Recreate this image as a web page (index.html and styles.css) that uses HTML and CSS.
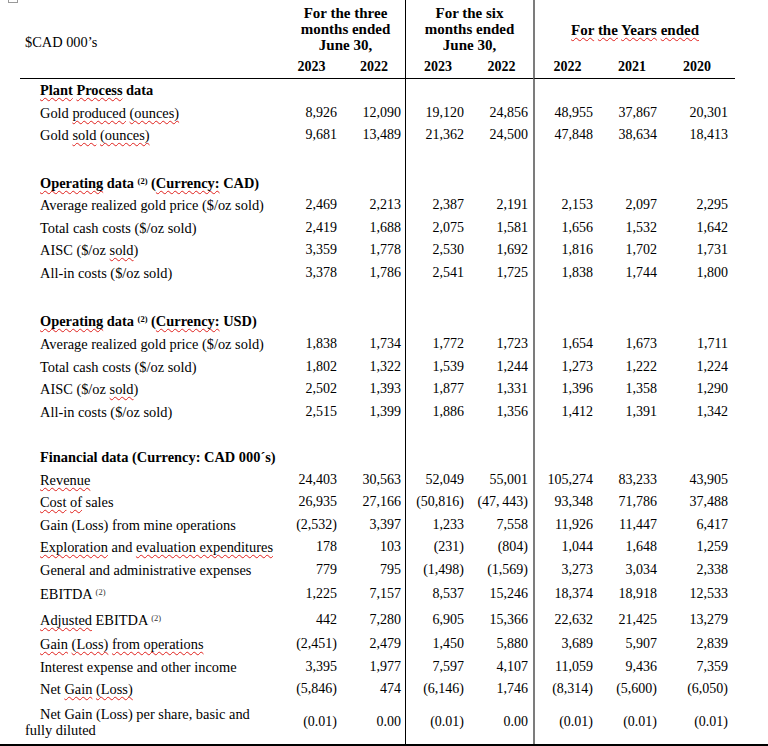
FILE: index.html
```html
<!DOCTYPE html>
<html lang="en">
<head>
<meta charset="utf-8">
<title>Financial highlights</title>
<link rel="stylesheet" href="styles.css">
</head>
<body>
<div class="page">
  <span class="handle"></span>
  <table class="fin">
    <colgroup>
      <col class="c0"><col class="c1"><col class="c2"><col class="c3"><col class="c4"><col class="c5"><col class="c6"><col class="c7">
    </colgroup>
    <thead>
      <tr class="hd1">
        <th class="cad" rowspan="2">$CAD 000’s</th>
        <th colspan="2" class="grp g3">For the three<br>months ended<br>June 30,</th>
        <th colspan="2" class="grp sep1">For the six<br>months ended<br>June 30,</th>
        <th colspan="3" class="grp gy sep2"><span class="sp">For</span> <span class="sp">the</span> <span class="sp">Years</span> <span class="sp">ended</span></th>
      </tr>
      <tr class="hd2">
        <th class="yr">2023</th><th class="yr">2022</th><th class="yr sep1">2023</th><th class="yr">2022</th><th class="yr sep2">2022</th><th class="yr">2021</th><th class="yr y7">2020</th>
      </tr>
    </thead>
    <tbody>
      <tr><td class="l h"><span class="sp">Plant</span> <span class="sp">Process</span> data</td><td></td><td></td><td></td><td></td><td></td><td></td><td></td></tr>
      <tr><td class="l">Gold <span class="sp">produced</span> <span class="sp">(ounces)</span></td><td>8,926</td><td>12,090</td><td>19,120</td><td>24,856</td><td>48,955</td><td>37,867</td><td>20,301</td></tr>
      <tr><td class="l">Gold <span class="sp">sold</span> <span class="sp">(ounces)</span></td><td>9,681</td><td>13,489</td><td>21,362</td><td>24,500</td><td>47,848</td><td>38,634</td><td>18,413</td></tr>
      <tr class="blank-a"><td></td><td></td><td></td><td></td><td></td><td></td><td></td><td></td></tr>

      <tr><td class="l h"><span class="sp">Operating</span> data <sup class="fn">(2)</sup> (<span class="sp">Currency:</span> CAD)</td><td></td><td></td><td></td><td></td><td></td><td></td><td></td></tr>
      <tr><td class="l">Average realized gold price ($/oz sold)</td><td>2,469</td><td>2,213</td><td>2,387</td><td>2,191</td><td>2,153</td><td>2,097</td><td>2,295</td></tr>
      <tr><td class="l">Total cash costs ($/oz sold)</td><td>2,419</td><td>1,688</td><td>2,075</td><td>1,581</td><td>1,656</td><td>1,532</td><td>1,642</td></tr>
      <tr><td class="l">AISC ($/oz <span class="sp">sold</span>)</td><td>3,359</td><td>1,778</td><td>2,530</td><td>1,692</td><td>1,816</td><td>1,702</td><td>1,731</td></tr>
      <tr><td class="l">All-in costs ($/oz sold)</td><td>3,378</td><td>1,786</td><td>2,541</td><td>1,725</td><td>1,838</td><td>1,744</td><td>1,800</td></tr>
      <tr class="blank-a"><td></td><td></td><td></td><td></td><td></td><td></td><td></td><td></td></tr>

      <tr class="head-usd"><td class="l h"><span class="sp">Operating</span> data <sup class="fn">(2)</sup> (<span class="sp">Currency:</span> USD)</td><td></td><td></td><td></td><td></td><td></td><td></td><td></td></tr>
      <tr><td class="l">Average realized gold price ($/oz sold)</td><td>1,838</td><td>1,734</td><td>1,772</td><td>1,723</td><td>1,654</td><td>1,673</td><td>1,711</td></tr>
      <tr><td class="l">Total cash costs ($/oz sold)</td><td>1,802</td><td>1,322</td><td>1,539</td><td>1,244</td><td>1,273</td><td>1,222</td><td>1,224</td></tr>
      <tr><td class="l">AISC ($/oz <span class="sp">sold</span>)</td><td>2,502</td><td>1,393</td><td>1,877</td><td>1,331</td><td>1,396</td><td>1,358</td><td>1,290</td></tr>
      <tr><td class="l">All-in costs ($/oz sold)</td><td>2,515</td><td>1,399</td><td>1,886</td><td>1,356</td><td>1,412</td><td>1,391</td><td>1,342</td></tr>
      <tr class="blank-b"><td></td><td></td><td></td><td></td><td></td><td></td><td></td><td></td></tr>

      <tr><td class="l h">Financial data (Currency: CAD 000´s)</td><td></td><td></td><td></td><td></td><td></td><td></td><td></td></tr>
      <tr><td class="l"><span class="sp">Revenue</span></td><td>24,403</td><td>30,563</td><td>52,049</td><td>55,001</td><td>105,274</td><td>83,233</td><td>43,905</td></tr>
      <tr><td class="l"><span class="sp">Cost</span> <span class="sp">of</span> sales</td><td>26,935</td><td>27,166</td><td>(50,816)</td><td>(47,&#8201;443)</td><td>93,348</td><td>71,786</td><td>37,488</td></tr>
      <tr><td class="l">Gain (Loss) from mine operations</td><td>(2,532)</td><td>3,397</td><td>1,233</td><td>7,558</td><td>11,926</td><td>11,447</td><td>6,417</td></tr>
      <tr><td class="l"><span class="sp">Exploration</span> and <span class="sp">evaluation expenditures</span></td><td>178</td><td>103</td><td>(231)</td><td>(804)</td><td>1,044</td><td>1,648</td><td>1,259</td></tr>
      <tr><td class="l">General and administrative expenses</td><td>779</td><td>795</td><td>(1,498)</td><td>(1,569)</td><td>3,273</td><td>3,034</td><td>2,338</td></tr>
      <tr class="r-ebitda"><td class="l">EBITDA <sup class="fn lt">(2)</sup></td><td>1,225</td><td>7,157</td><td>8,537</td><td>15,246</td><td>18,374</td><td>18,918</td><td>12,533</td></tr>
      <tr class="r-adj"><td class="l"><span class="sp">Adjusted</span> EBITDA <sup class="fn lt">(2)</sup></td><td>442</td><td>7,280</td><td>6,905</td><td>15,366</td><td>22,632</td><td>21,425</td><td>13,279</td></tr>
      <tr><td class="l"><span class="sp">Gain</span> <span class="sp">(Loss)</span> <span class="sp">from operations</span></td><td>(2,451)</td><td>2,479</td><td>1,450</td><td>5,880</td><td>3,689</td><td>5,907</td><td>2,839</td></tr>
      <tr><td class="l">Interest expense and other income</td><td>3,395</td><td>1,977</td><td>7,597</td><td>4,107</td><td>11,059</td><td>9,436</td><td>7,359</td></tr>
      <tr><td class="l">Net <span class="sp">Gain</span> <span class="sp">(Loss)</span></td><td>(5,846)</td><td>474</td><td>(6,146)</td><td>1,746</td><td>(8,314)</td><td>(5,600)</td><td>(6,050)</td></tr>
      <tr class="r-last"><td class="l wrap">Net Gain (Loss) per share, basic and fully diluted</td><td>(0.01)</td><td>0.00</td><td>(0.01)</td><td>0.00</td><td>(0.01)</td><td>(0.01)</td><td>(0.01)</td></tr>
    </tbody>
  </table>
</div>
</body>
</html>
```

FILE: styles.css
```css
html, body {
  margin: 0;
  padding: 0;
  background: #fff;
}

body {
  font-family: "Liberation Serif", "Times New Roman", serif;
  color: #000;
}

.page {
  position: relative;
  width: 768px;
  height: 744px;
  border-bottom: 2px solid #000;
  overflow: hidden;
}

.handle {
  position: absolute;
  left: 8px;
  top: -4px;
  width: 8px;
  height: 5px;
  border: 1px solid #9a9a9a;
}

.fin {
  margin-left: 20px;
  width: 715px;
  table-layout: fixed;
  border-collapse: separate;
  border-spacing: 0;
}

.fin col, .fin th, .fin td {
  box-sizing: border-box;
}

.c0 { width: 260px; }
.c1 { width: 63px; }
.c2 { width: 62px; }
.c3 { width: 65px; }
.c4 { width: 63px; }
.c5 { width: 67px; }
.c6 { width: 64px; }
.c7 { width: 71px; }

/* header */
.fin th {
  font-weight: bold;
  padding: 0;
  vertical-align: middle;
  text-align: center;
  white-space: nowrap;
}

.hd1 { height: 56px; }
.hd1 th { line-height: 16px; font-size: 15px; }
.hd1 .grp { vertical-align: top; padding-top: 5px; }
.hd1 .g3 { padding-left: 6px; }
.hd1 .gy { vertical-align: middle; padding-top: 3px; }

.fin th.cad {
  font-weight: normal;
  font-size: 14.4px;
  text-align: left;
  padding-left: 5px;
  padding-top: 6px;
  border-bottom: 1px solid #000;
}

.hd2 { height: 23px; }
.hd2 th {
  font-size: 14px;
  line-height: 16px;
  border-bottom: 1px solid #000;
}
.hd2 .y7 { padding-right: 5px; }

.sep1 { border-left: 1px solid #000; }
.sep2 { border-left: 2px solid #7c7c7c; }

/* body */
.fin tbody tr { height: 22.6px; }
.fin tbody tr.blank-a { height: 24.5px; }
.fin tbody tr.blank-b { height: 22.5px; }
.fin tbody tr.head-usd { height: 24px; }
.fin tbody tr.r-ebitda { height: 25.5px; }
.fin tbody tr.r-adj { height: 26px; }
.fin tbody tr.r-last { height: 43.4px; }

.fin td {
  padding: 0;
  font-size: 14px;
  line-height: 16px;
  text-align: right;
  vertical-align: middle;
  white-space: nowrap;
}

.fin td:nth-child(2) { padding-right: 6px; }
.fin td:nth-child(3) { padding-right: 4px; }
.fin td:nth-child(4) { padding-right: 6px; border-left: 1px solid #000; }
.fin td:nth-child(5) { padding-right: 5px; }
.fin td:nth-child(6) { padding-right: 7px; border-left: 2px solid #7c7c7c; }
.fin td:nth-child(7) { padding-right: 7px; }
.fin td:nth-child(8) { padding-right: 7px; }

.fin td.l {
  text-align: left;
  font-size: 14.4px;
  padding-left: 5px;
  text-indent: 15px;
}

.fin td.h { font-weight: bold; }

.fin td.wrap {
  white-space: normal;
  padding-right: 20px;
}

.fn {
  font-size: 8.5px;
  line-height: 0;
  vertical-align: 4px;
}

.fn.lt { font-weight: normal; color: #333; }

.sp {
  text-decoration-line: underline;
  text-decoration-style: wavy;
  text-decoration-color: #e0201c;
  text-decoration-thickness: 1px;
  text-underline-offset: 2px;
  text-decoration-skip-ink: none;
}
```
